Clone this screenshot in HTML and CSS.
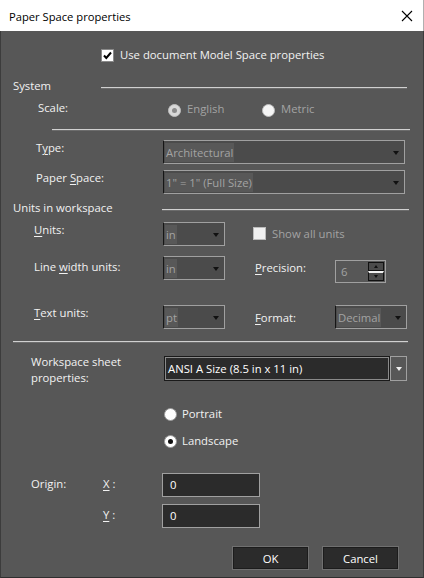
FILE: index.html
```html
<html>
    <head>
        <link rel="stylesheet" href="styles.css">
    </head>
    <body>
        <div class="dialog">
            <div class="titlebar">
                <span class="title">Paper Space properties</span>
                <svg class="close" width="12" height="12" viewBox="0 0 12 12">
                    <path d="M1 1 L11 11 M11 1 L1 11" stroke="#000" stroke-width="1.1"/>
                </svg>
            </div>
            <div class="content">
                <!-- top option -->
                <div class="row row-check">
                    <span class="check checked">
                        <svg width="11" height="11" viewBox="0 0 11 11"><path d="M2 5.5 L4.3 8 L9 2.5" fill="none" stroke="#000" stroke-width="2"/></svg>
                    </span>
                    <span class="check-label">Use document Model Space properties</span>
                </div>

                <!-- System -->
                <div class="row group-head head-system">
                    <span class="group-label">System</span>
                    <span class="rule"></span>
                </div>
                <div class="row row-scale">
                    <span class="label lbl-scale">Scale:</span>
                    <span class="radio disabled checked"><span class="dot"></span></span>
                    <span class="radio-label dim">English</span>
                    <span class="radio disabled metric"></span>
                    <span class="radio-label dim">Metric</span>
                </div>
                <div class="rule rule-scale"></div>

                <div class="row row-combo row-type">
                    <span class="label lbl-wide">T<u>y</u>pe:</span>
                    <div class="combo combo-long"><span class="sel">Architectural</span><span class="arrow"></span></div>
                </div>
                <div class="row row-combo row-paper">
                    <span class="label lbl-wide">Paper <u>S</u>pace:</span>
                    <div class="combo combo-long"><span class="sel">1" = 1" (Full Size)</span><span class="arrow"></span></div>
                </div>

                <!-- Units -->
                <div class="row group-head head-units">
                    <span class="group-label units-label">Units in workspace</span>
                    <span class="rule"></span>
                </div>
                <div class="row row-combo row-units">
                    <span class="label lbl-unit"><u>U</u>nits:</span>
                    <div class="combo combo-small"><span class="sel">in</span><span class="arrow"></span></div>
                    <span class="check disabled show-all"></span>
                    <span class="check-label dim">Show all units</span>
                </div>
                <div class="row row-combo row-linew">
                    <span class="label lbl-unit off-3">Line <u>w</u>idth units:</span>
                    <div class="combo combo-small"><span class="sel">in</span><span class="arrow"></span></div>
                    <span class="label lbl-side off-4"><u>P</u>recision:</span>
                    <div class="spin">
                        <span class="spin-value">6</span>
                        <div class="spin-buttons">
                            <span class="spin-btn"><span class="tri up"></span></span>
                            <span class="spin-btn"><span class="tri"></span></span>
                        </div>
                    </div>
                </div>
                <div class="row row-combo row-textu">
                    <span class="label lbl-unit"><u>T</u>ext units:</span>
                    <div class="combo combo-small"><span class="sel">pt</span><span class="arrow"></span></div>
                    <span class="label lbl-side off-5"><u>F</u>ormat:</span>
                    <div class="combo combo-format"><span class="sel">Decimal</span><span class="arrow"></span></div>
                </div>
                <div class="rule rule-sheet"></div>

                <!-- Sheet -->
                <div class="row row-sheet">
                    <span class="label lbl-sheet">Workspace sheet<br>properties:</span>
                    <div class="dropdown">
                        <span class="dropdown-text">ANSI A Size (8.5 in x 11 in)</span>
                        <span class="dropdown-btn"><span class="arrow light"></span></span>
                    </div>
                </div>
                <div class="row row-radio row-portrait">
                    <span class="radio"></span>
                    <span class="radio-label">Portrait</span>
                </div>
                <div class="row row-radio row-landscape">
                    <span class="radio checked"><span class="dot"></span></span>
                    <span class="radio-label">Landscape</span>
                </div>

                <!-- Origin -->
                <div class="row row-origin row-x">
                    <span class="label lbl-origin">Origin:</span>
                    <span class="label lbl-axis"><u>X</u> :</span>
                    <div class="field">0</div>
                </div>
                <div class="row row-origin row-y">
                    <span class="label lbl-origin"></span>
                    <span class="label lbl-axis"><u>Y</u> :</span>
                    <div class="field">0</div>
                </div>

                <div class="row row-buttons">
                    <button class="btn">OK</button>
                    <button class="btn">Cancel</button>
                </div>
            </div>
        </div>
    </body>
</html>
```

FILE: styles.css
```css
body {
    margin: 0;
    font-family: "Open Sans", "Noto Sans", sans-serif;
    font-size: 11.3px;
    background: #575757;
}
.dialog {
    width: 424px;
    height: 578px;
    display: flex;
    flex-direction: column;
}
.titlebar {
    height: 31px;
    background: #ffffff;
    display: flex;
    align-items: center;
    justify-content: space-between;
    padding: 0 10px 0 9px;
    box-sizing: border-box;
    color: #000;
    border-right: 1px solid #b0b0b0;
}
.title {
    font-size: 11.2px;
    margin-top: 1px;
}
.content {
    flex: 1;
    background: #575757;
    border-left: 1px solid #3c3c3c;
    border-right: 1px solid #3c3c3c;
    border-bottom: 1px solid #2e2e2e;
    color: #f2f2f2;
}

.row {
    display: flex;
    align-items: center;
    line-height: 16px;
}
u {
    text-decoration: underline;
    text-underline-offset: 2px;
}
.dim {
    color: #a3a3a3;
}

/* checkbox */
.check {
    width: 13px;
    height: 13px;
    box-sizing: border-box;
    background: #ffffff;
    border: 1px solid #8a8a8a;
    display: flex;
    align-items: center;
    justify-content: center;
}
.check.disabled {
    background: #f0f0f0;
    border-color: #bcbcbc;
}
.check-label {
    margin-left: 6px;
}
.row-check {
    height: 16px;
    margin-top: 16px;
    padding-left: 100px;
}

/* group headings */
.group-head {
    height: 16px;
    padding-right: 16px;
}
.group-label {
    width: 88px;
}
.units-label {
    width: 149px;
}
.head-system {
    margin-top: 15px;
    padding-left: 12px;
}
.head-units {
    margin-top: 6px;
    padding-left: 12px;
    padding-right: 14px;
}
.rule {
    flex: 1;
    height: 2px;
    margin-top: 4px;
    box-sizing: border-box;
    border-top: 1px solid #d0d0d0;
    border-bottom: 1px solid #6c6c6c;
}
.rule-scale {
    margin: 12px 13px 0 51px;
}
.rule-sheet {
    margin: 12px 15px 0 12px;
}

/* radios */
.radio {
    width: 13px;
    height: 13px;
    box-sizing: border-box;
    border-radius: 50%;
    background: #ffffff;
    border: 1px solid #9a9a9a;
    display: flex;
    align-items: center;
    justify-content: center;
}
.radio .dot {
    width: 5px;
    height: 5px;
    border-radius: 50%;
    background: #111;
}
.radio.disabled {
    background: #d8d8d8;
    border-color: #bdbdbd;
}
.radio.disabled .dot {
    background: #8a8a8a;
}
.radio.metric {
    background: #f4f4f4;
}
.radio-label {
    margin-left: 5px;
}
.row-scale {
    height: 16px;
    margin-top: 7px;
    padding-left: 37px;
}
.lbl-scale {
    width: 130px;
    margin-top: -3px;
}
.row-scale .radio-label {
    width: 75px;
    margin-left: 6px;
}
.row-scale .radio {
    margin-top: 2px;
}

/* label + combo rows */
.row-combo {
    height: 24px;
    align-items: flex-start;
}
.label {
    line-height: 16px;
}
.off-3 { margin-top: 3px; }
.off-4 { margin-top: 4px; }
.off-5 { margin-top: 5px; }
.row-type {
    margin-top: 9px;
    padding-left: 35px;
}
.row-paper {
    margin-top: 6px;
    padding-left: 35px;
}
.lbl-wide {
    width: 127px;
}
.row-units {
    margin-top: 6px;
    padding-left: 33px;
}
.row-linew {
    margin-top: 10px;
    padding-left: 33px;
}
.row-textu {
    margin-top: 25px;
    padding-left: 33px;
}
.lbl-unit {
    width: 129px;
}
.lbl-side {
    width: 80px;
    margin-left: 30px;
}
.show-all {
    margin: 5px 0 0 28px;
}
.row-units .check-label {
    margin-top: 4px;
}

.combo {
    height: 24px;
    box-sizing: border-box;
    background: #4b4b4b;
    border: 1px solid #a0a0a0;
    border-left: 1px solid #161616;
    display: flex;
    align-items: center;
    justify-content: space-between;
    padding: 0 5px 0 1px;
    color: #a3a3a3;
}
.combo .sel {
    background: #585858;
    line-height: 19px;
    padding: 0 1px;
}
.combo-long {
    width: 242px;
}
.combo-small {
    width: 62px;
}
.combo-format {
    width: 72px;
}
.arrow {
    width: 0;
    height: 0;
    border-left: 3.5px solid transparent;
    border-right: 3.5px solid transparent;
    border-top: 4px solid #111;
    margin-top: 1px;
}
.arrow.light {
    border-top-color: #f0f0f0;
}

/* spin box */
.spin {
    width: 51px;
    height: 23px;
    margin-top: 4px;
    box-sizing: border-box;
    border: 1px solid #a0a0a0;
    display: flex;
    justify-content: space-between;
    color: #a3a3a3;
}
.spin-value {
    padding-left: 5px;
    line-height: 21px;
}
.spin-buttons {
    display: flex;
    flex-direction: column;
    width: 17px;
    padding: 1px 1px 1px 0;
    box-sizing: border-box;
}
.spin-btn {
    flex: 1;
    background: #4b4b4b;
    border: 1px solid #111;
    display: flex;
    align-items: center;
    justify-content: center;
}
.spin-btn + .spin-btn {
    border-top: 2px solid #f0f0f0;
}
.tri {
    width: 0;
    height: 0;
    border-left: 2.5px solid transparent;
    border-right: 2.5px solid transparent;
    border-top: 3px solid #111;
}
.tri.up {
    border-top: 0;
    border-bottom: 3px solid #111;
}

/* sheet */
.row-sheet {
    height: 32px;
    margin-top: 10px;
    padding-left: 30px;
    align-items: flex-start;
}
.lbl-sheet {
    width: 133px;
    margin-top: 1px;
}
.dropdown {
    width: 243px;
    height: 25px;
    margin-top: 3px;
    display: flex;
}
.dropdown-text {
    flex: 1;
    background: #2b2b2b;
    border: 1px solid #1a1a1a;
    outline: 1px solid #8a8a8a;
    outline-offset: -2px;
    padding-left: 3px;
    line-height: 23px;
    color: #ffffff;
}
.dropdown-btn {
    width: 15px;
    background: #575757;
    border: 1px solid #a0a0a0;
    display: flex;
    align-items: center;
    justify-content: center;
}
.row-radio {
    height: 16px;
    padding-left: 163px;
}
.row-portrait {
    margin-top: 21px;
}
.row-landscape {
    margin-top: 11px;
}

/* origin */
.row-origin {
    height: 24px;
    padding-left: 30px;
    align-items: flex-start;
}
.row-x {
    margin-top: 24px;
}
.row-y {
    margin-top: 7px;
}
.lbl-origin {
    width: 72px;
    margin-top: 3px;
}
.lbl-axis {
    width: 59px;
    margin-top: 3px;
}
.field {
    width: 98px;
    height: 24px;
    box-sizing: border-box;
    background: #2b2b2b;
    border: 1px solid #a0a0a0;
    padding-left: 7px;
    line-height: 21px;
    color: #ffffff;
}

/* buttons */
.row-buttons {
    height: 24px;
    margin-top: 18px;
    padding-left: 231px;
    gap: 13px;
}
.btn {
    width: 77px;
    height: 24px;
    background: #2b2b2b;
    border: 1px solid #707070;
    box-shadow: inset 0 0 0 1px #1c1c1c;
    color: #ffffff;
    font-family: inherit;
    font-size: 11.3px;
    padding: 0;
}
```
